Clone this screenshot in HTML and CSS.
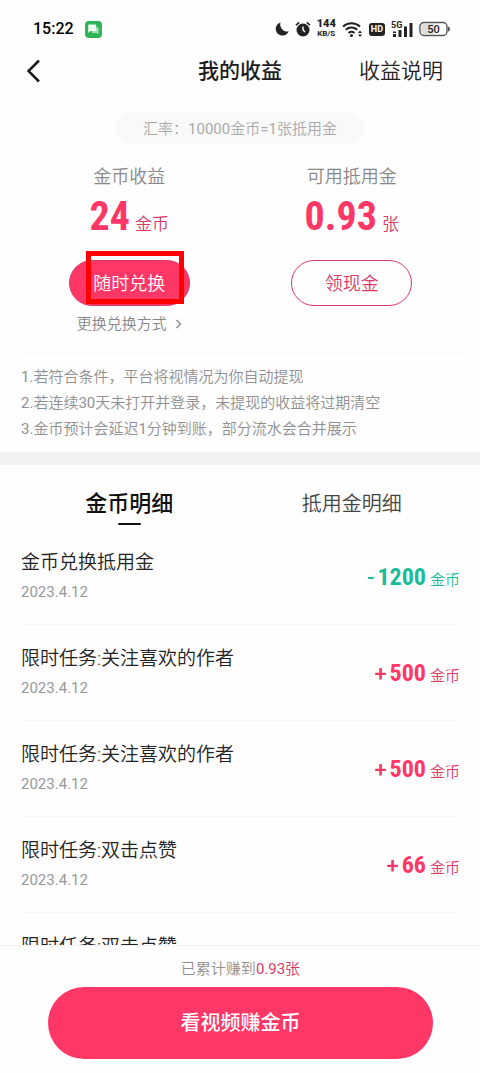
FILE: index.html
```html
<!DOCTYPE html>
<html lang="zh-CN">
<head>
<meta charset="utf-8">
<meta name="viewport" content="width=device-width, initial-scale=1">
<title>我的收益</title>
<link rel="stylesheet" href="styles.css">
</head>
<body>
<div class="app">
  <div class="status">
    <span class="clock">15:22</span>
    <svg class="chat" width="17" height="17" viewBox="0 0 17 17" aria-hidden="true">
      <rect width="17" height="17" rx="4" fill="#2fb457"/>
      <path d="M7 6.500h6.500v7l-1.800-1.500H7z" fill="#a5e3b7"/>
      <path d="M4.200 3.500h6a1 1 0 0 1 1 1v4.500a1 1 0 0 1-1 1H5.500L3.200 12V4.500a1 1 0 0 1 1-1z" fill="#effbf1"/>
    </svg>
    <div class="indicators">
      <svg width="14" height="14" viewBox="0 0 14 14" aria-hidden="true"><path d="M5.500.5A6.700 6.700 0 1 0 13.700 9.300 7 7 0 0 1 5.500.5z" fill="#222"/></svg>
      <svg width="16" height="16" viewBox="0 0 16 16" aria-hidden="true"><circle cx="8" cy="9" r="6.500" fill="#222"/><path d="M1 4.200 4.200 1.300M15 4.200l-3.200-2.900" stroke="#222" stroke-width="1.600"/><path d="M8 5.500V9l2 2" fill="none" stroke="#fff" stroke-width="1.400"/></svg>
      <span class="speed"><b>144</b><small>KB/S</small></span>
      <svg width="21" height="17" viewBox="0 0 21 17" aria-hidden="true"><g fill="none" stroke="#222" stroke-width="2"><path d="M1 5.500a12.500 12.500 0 0 1 17 0"/><path d="M3.800 8.800a8.500 8.500 0 0 1 11.400 0"/><path d="M6.500 12a4.800 4.800 0 0 1 6 0"/></g><circle cx="9.500" cy="14.500" r="1.500" fill="#222"/><path d="m16 12 2-2.500 2 2.500zM16 13.500h4L18 16z" fill="#222"/></svg>
      <span class="hd">HD</span>
      <svg width="22" height="18" viewBox="0 0 22 18" aria-hidden="true"><text class="signal-text" x="0" y="8">5G</text><path d="M2 11.500h3v1.500H2zM2 14h3v3H2zM7.500 10h3v7h-3zM13 6.500h3V17h-3zM18.500 3h3v14h-3z" fill="#222"/></svg>
      <svg width="31" height="16" viewBox="0 0 31 16" aria-hidden="true"><rect x="1" y="1.500" width="27" height="13" rx="4" fill="#fff" stroke="#555" stroke-width="1.400"/><path d="M5 3h10v10H5a2.500 2.500 0 0 1-2.500-2.500v-5A2.500 2.500 0 0 1 5 3z" fill="#ddd"/><path d="M29 5.500q2 0 2 2.500t-2 2.500z" fill="#555"/><text class="battery-text" x="14.500" y="12">50</text></svg>
    </div>
  </div>

  <header class="header">
    <button class="back" aria-label="返回"><svg width="16" height="24" viewBox="0 0 16 24" aria-hidden="true"><path d="M14 1.500 3.500 12 14 22.500" fill="none" stroke="#1c1c1c" stroke-width="2.500"/></svg></button>
    <h1 class="title">我的收益</h1>
    <a class="explain" href="#">收益说明</a>
  </header>

  <main class="main">
    <section class="summary">
      <p class="rate">汇率：10000金币=1张抵用金</p>
      <div class="stats">
        <div class="stat">
          <p class="label">金币收益</p>
          <p class="value"><strong>24</strong><span>金币</span></p>
          <button class="pill filled">随时兑换<i class="marker"></i></button>
          <a class="method" href="#">更换兑换方式<svg width="7" height="10" viewBox="0 0 7 10" aria-hidden="true"><path d="m1.500 1 4 4-4 4" fill="none" stroke="#888" stroke-width="1.300"/></svg></a>
        </div>
        <div class="stat">
          <p class="label">可用抵用金</p>
          <p class="value"><strong>0.93</strong><span>张</span></p>
          <button class="pill">领现金</button>
        </div>
      </div>
      <div class="notes">
        <p>1.若符合条件，平台将视情况为你自动提现</p>
        <p>2.若连续30天未打开并登录，未提现的收益将过期清空</p>
        <p>3.金币预计会延迟1分钟到账，部分流水会合并展示</p>
      </div>
    </section>

    <nav class="tabs">
      <button class="tab active">金币明细</button>
      <button class="tab">抵用金明细</button>
    </nav>

    <ul class="list">
      <li class="row"><div><p class="name">金币兑换抵用金</p><p class="date">2023.4.12</p></div><p class="amount out"><i>-</i><b>1200</b>金币</p></li>
      <li class="row"><div><p class="name">限时任务:关注喜欢的作者</p><p class="date">2023.4.12</p></div><p class="amount"><i>+</i><b>500</b>金币</p></li>
      <li class="row"><div><p class="name">限时任务:关注喜欢的作者</p><p class="date">2023.4.12</p></div><p class="amount"><i>+</i><b>500</b>金币</p></li>
      <li class="row"><div><p class="name">限时任务:双击点赞</p><p class="date">2023.4.12</p></div><p class="amount"><i>+</i><b>66</b>金币</p></li>
      <li class="row"><div><p class="name">限时任务:双击点赞</p></div></li>
    </ul>
  </main>

  <footer class="footer">
    <p class="total">已累计赚到<span>0.93张</span></p>
    <button class="watch">看视频赚金币</button>
  </footer>
</div>
</body>
</html>
```
FILE: styles.css
```css
* { box-sizing: border-box; }
body, p, h1, ul { margin: 0; padding: 0; }
body {
  background: #fefefe;
  color: #222;
  font: 400 15px/24px Roboto, "Noto Sans CJK SC DemiLight", "Noto Sans CJK SC", sans-serif;
}
button { font: inherit; color: inherit; background: none; border: 0; padding: 0; cursor: pointer; }
a { color: inherit; text-decoration: none; }
i { font-style: normal; }
svg { display: block; flex: none; }

.app { display: flex; flex-direction: column; height: 100vh; }

.status { display: flex; align-items: center; padding: 17px 30px 0 33px; height: 41px; flex: none; }
.clock { font-size: 16px; font-weight: 500; color: #000; }
.chat { margin-left: 11px; }
.indicators { display: flex; align-items: center; gap: 6px; margin-left: auto; }
.speed { display: flex; flex-direction: column; align-items: center; font-weight: 700; }
.speed b { font-size: 11px; line-height: 10px; }
.speed small { font-size: 8px; line-height: 10px; }
.hd { background: #222; color: #fff; border-radius: 3px; padding: 0 2px; font-size: 9px; font-weight: 700; line-height: 13px; }
.signal-text { font: 700 9px Roboto, sans-serif; fill: #222; }
.battery-text { font: 500 11px Roboto, sans-serif; fill: #222; text-anchor: middle; }

.header { display: grid; grid-template-columns: 1fr auto 1fr; align-items: center; height: 60px; padding: 0 37px 0 25px; flex: none; }
.back { justify-self: start; }
.title, .active, .watch { font-family: Roboto, "Noto Sans CJK SC", sans-serif; font-weight: 500; }
.title { font-size: 21px; color: #1c1c1c; padding-left: 12px; }
.explain { justify-self: end; font-size: 21px; font-weight: 350; color: #222; }

.main { flex: 1; min-height: 0; overflow: hidden; }
.summary { padding-top: 11px; border-bottom: 13px solid #f2f2f2; }
.rate { width: fit-content; margin: 0 auto; padding: 5px 27px 3px; border-radius: 16px; background: #f9f9f9; color: #aaa; }
.stats { display: grid; grid-template-columns: 1fr 1fr; padding: 21px 17px 0 18px; }
.stat { display: flex; flex-direction: column; align-items: center; font-weight: 350; }
.label { font-size: 18px; color: #888; }
.value { display: flex; align-items: baseline; gap: 5px; margin-top: 4px; height: 48px; line-height: 48px; color: #d93a66; font-size: 17px; }
.value strong { font: 700 40px/48px "Roboto Condensed", "Liberation Sans Narrow", Roboto, sans-serif; color: #ff3767; }
.pill { position: relative; width: 121px; height: 46px; margin-top: 19px; padding-top: 2px; border: 1px solid #d93a66; border-radius: 23px; color: #d93a66; font-size: 18px; }
.filled { background: #ff3767; color: #fff; }
.marker { position: absolute; inset: -10px 5px 1px 16px; border: 5px solid #f00; }
.method { display: flex; align-items: center; gap: 8px; margin-top: 6px; color: #888; }
.notes { margin: 17px 20px 0 21px; padding: 10px 0; border-top: 1px solid #f7f7f7; color: #909090; }
.notes p { line-height: 26px; }

.tabs { display: grid; grid-template-columns: 1fr 1fr; padding: 0 17px 0 18px; height: 64px; }
.tab { position: relative; padding-top: 13px; color: #444; font-size: 20px; font-weight: 350; }
.tab.active { color: #111; font-size: 22px; font-weight: 500; }
.active::after { content: ""; position: absolute; left: 50%; bottom: 4px; width: 23px; height: 2px; margin-left: -11px; border-radius: 1px; background: #111; }

.list { list-style: none; padding: 0 20px 0 21px; }
.row { display: flex; justify-content: space-between; height: 96px; padding-top: 20px; border-bottom: 1px solid #f7f7f7; }
.name { font-size: 19px; font-weight: 350; line-height: 28px; color: #222; }
.date { margin-top: 3px; line-height: 24px; color: #999; }
.amount { display: flex; align-items: baseline; margin-top: 13px; font-weight: 350; color: #d93a66; }
.amount i { margin-right: 3px; font-size: 22px; font-weight: 500; color: #ee3868; }
.amount b { margin-right: 4px; font: 700 24px/30px "Roboto Condensed", "Liberation Sans Narrow", Roboto, sans-serif; color: #ff3767; }
.amount.out, .out i, .out b { color: #19bc99; }

.footer { flex: none; padding: 11px 47px 14px 48px; border-top: 1px solid #f2f2f2; text-align: center; }
.total { color: #909090; }
.total span { color: #d93a66; }
.watch { display: block; width: 100%; height: 72px; margin-top: 6px; border-radius: 36px; background: #ff3767; color: #fff; font-size: 20px; }
```
